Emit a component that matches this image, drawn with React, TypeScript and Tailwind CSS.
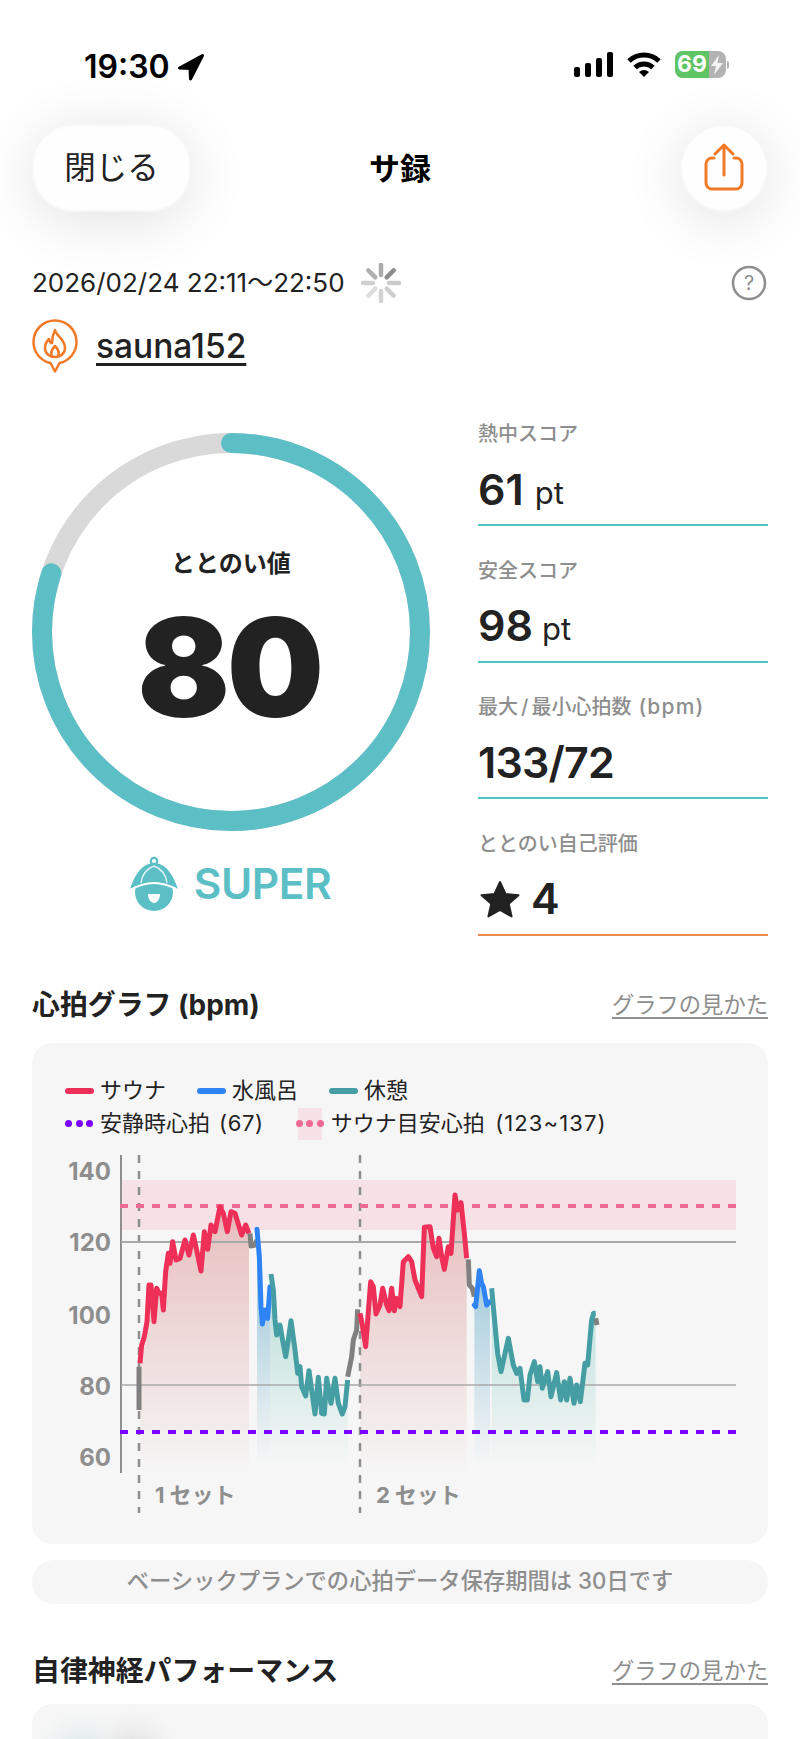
const red1 = "45,520 50,465 58,440 66,395 72,285 78,285 87,395 95,295 103,310 110,310 115,360 122,245 130,190 135,220 143,155 153,210 165,205 180,150 192,195 205,135 215,180 228,243 238,125 248,178 258,105 270,125 285,50 295,70 307,125 318,65 330,70 350,135 362,105 372,130"
const blue1 = "396,118 403,200 408,350 412,402 420,360 428,385 435,290"
const teal1 = "438,252 445,300 450,390 455,435 465,405 470,435 482,500 490,450 498,392 510,480 518,550 525,530 530,590 542,618 552,542 560,600 570,672 580,562 590,670 598,672 605,565 618,640 630,565 640,640 652,672 660,650 668,570"
const red2 = "705,370 712,405 722,470 737,275 745,290 753,372 765,345 773,295 785,345 792,362 800,295 808,362 815,325 825,350 835,215 850,200 860,215 870,270 890,320 898,112 915,110 925,175 935,200 942,145 950,200 958,238 970,170 978,190 990,15 998,60 1008,38 1018,130 1025,205"
const blue2 = "1048,345 1052,350 1063,242 1070,280 1075,290 1085,345 1095,335"
const teal2 = "1100,295 1104,340 1118,490 1128,545 1150,445 1165,525 1175,550 1185,535 1197,630 1207,630 1215,555 1228,515 1238,575 1245,530 1252,595 1268,545 1278,620 1295,548 1307,630 1318,575 1325,630 1335,565 1347,640 1355,585 1366,635 1380,520 1388,525 1400,390 1406,370 1412,370"

const gray = [
  "42,660 42,530",
  "375,130 378,168 390,165 396,150",
  "668,560 680,500 685,450 695,420 698,358",
  "1030,208 1033,285 1042,295 1048,320",
  "1412,385 1416,405",
]

// segments are traced in a 3x grid, offset from the top left of the plot
const toPage = (pts: string) =>
  pts
    .split(" ")
    .map((p) => {
      const [x, y] = p.split(",").map(Number)
      return `${125 + x / 3},${1190 + y / 3}`
    })
    .join(" ")

// area under a segment, closed down to the chart floor
const area = (pts: string) => {
  const list = pts.split(" ")
  const first = list[0].split(",")[0]
  const last = list[list.length - 1].split(",")[0]
  return toPage(`${first},849 ${pts} ${last},849`)
}

function StatusBar() {
  return (
    <div className="flex h-[124px] items-start justify-between pl-[84px] pr-[71px] pt-[49px]">
      <div className="flex items-center gap-[7px]">
        <span className="text-[32px] font-semibold leading-[36px] text-black">19:30</span>
        <svg width="28" height="28" viewBox="0 0 28 28">
          <path d="M25.5 2.5 L2.5 15 L13 15.5 L13.5 26 Z" fill="#000" stroke="#000" strokeWidth="3" strokeLinejoin="round" />
        </svg>
      </div>
      <div className="flex items-center gap-[14px] pt-[2px]">
        <div className="flex h-[25px] items-end gap-[5px]">
          <div className="h-[10px] w-[6px] rounded-[2px] bg-black" />
          <div className="h-[14px] w-[6px] rounded-[2px] bg-black" />
          <div className="h-[19px] w-[6px] rounded-[2px] bg-black" />
          <div className="h-[25px] w-[6px] rounded-[2px] bg-black" />
        </div>
        <svg width="34" height="25" viewBox="0 0 34 25">
          <path d="M2 9 A22 22 0 0 1 32 9" fill="none" stroke="#000" strokeWidth="5" />
          <path d="M8 15.5 A13 13 0 0 1 26 15.5" fill="none" stroke="#000" strokeWidth="5" />
          <path d="M12 20 A8 8 0 0 1 22 20 L17 25 Z" fill="#000" />
        </svg>
        <div className="flex items-center">
          <div className="relative flex h-[27px] w-[51px] overflow-hidden rounded-[8px] bg-[#b3b3b3]">
            <div className="flex h-full w-[34px] items-center justify-center bg-[#5ec464] text-[23px] font-bold leading-none text-white">
              69
            </div>
            <svg width="12" height="20" viewBox="0 0 12 20" className="ml-[2px] mt-[4px]">
              <path d="M8 0 L0 11 L5 11 L3 20 L12 8 L6.5 8 Z" fill="#fff" opacity="0.85" />
            </svg>
          </div>
          <div className="ml-[1px] h-[8px] w-[2px] rounded-r-full bg-[#b3b3b3]" />
        </div>
      </div>
    </div>
  )
}

function NavBar() {
  return (
    <div className="mx-[32px] grid h-[88px] grid-cols-[1fr_auto_1fr] items-center">
      <button className="flex h-[88px] w-[159px] items-center justify-center rounded-[40px] border-2 border-[#f7f7f7] bg-[#fefefe] text-[31.5px] leading-none text-[#222] shadow-[0_8px_60px_rgba(0,0,0,0.12)]">
        閉じる
      </button>
      <div className="text-[31px] font-bold leading-none text-black">サ録</div>
      <div className="flex justify-end">
        <button className="flex h-[88px] w-[88px] items-center justify-center rounded-full border-2 border-[#f7f7f7] bg-[#fefefe] shadow-[0_8px_60px_rgba(0,0,0,0.12)]">
          <svg width="40" height="50" viewBox="0 0 40 50" fill="none" stroke="#f07a28" strokeWidth="3" strokeLinecap="round" strokeLinejoin="round">
            <path d="M10 15 H8 A6 6 0 0 0 2 21 V40 A6 6 0 0 0 8 46 H32 A6 6 0 0 0 38 40 V21 A6 6 0 0 0 32 15 H30" />
            <path d="M20 32 V3 M11 11 L20 2 L29 11" />
          </svg>
        </button>
      </div>
    </div>
  )
}

function Spinner() {
  const colors = ["#aaaaaa", "#8c8c8c", "#cccccc", "#cfcfcf", "#d2d2d2", "#dddddd", "#d0d0d0", "#b0b0b0"]
  return (
    <svg width="40" height="40" viewBox="-20 -20 40 40">
      {colors.map((c, i) => (
        <line key={i} x1="0" y1="-8" x2="0" y2="-18" stroke={c} strokeWidth="4.5" strokeLinecap="round" transform={`rotate(${i * 45})`} />
      ))}
    </svg>
  )
}

function Row(props: { label: React.ReactNode; line: string; children: React.ReactNode }) {
  return (
    <div className="h-[106px] border-b-2 pb-[4px]" style={{ borderColor: props.line }}>
      <div className="text-[20px] font-medium leading-[28px] text-[#8e8e8e]">{props.label}</div>
      <div className="mt-[10px] flex h-[62px] items-center text-[#222]">{props.children}</div>
    </div>
  )
}

function Score() {
  return (
    <div className="relative h-[398px] w-[398px]">
      <svg width="398" height="398" viewBox="0 0 398 398" className="absolute inset-0">
        <circle cx="199" cy="199" r="189" fill="none" stroke="#d9d9d9" strokeWidth="20" />
        <circle
          cx="199"
          cy="199"
          r="189"
          fill="none"
          stroke="#5dbfc6"
          strokeWidth="20"
          strokeLinecap="round"
          strokeDasharray="950 1187.5"
          transform="rotate(-90 199 199)"
        />
      </svg>
      <div className="absolute inset-0 flex flex-col items-center pt-[115px]">
        <div className="text-[24px] font-semibold leading-[32px] text-[#222]">ととのい値</div>
        <div className="mr-[4px] mt-[17px] text-[137px] font-black leading-[140px] tracking-[-3.5px] text-[#222]">80</div>
      </div>
    </div>
  )
}

function HatIcon() {
  return (
    <svg width="50" height="56" viewBox="0 0 50 56">
      <circle cx="25" cy="5" r="3.2" fill="none" stroke="#5dbfc6" strokeWidth="2.2" />
      <circle cx="25" cy="36" r="19" fill="#5dbfc6" />
      <path d="M1 33 C4 24 11 7 25 7 C39 7 46 24 49 33 C40 28 32 26 25 26 C18 26 10 28 1 33 Z" fill="#5dbfc6" />
      <path d="M1 34 C10 29 18 27 25 27 C32 27 40 29 49 34" fill="none" stroke="#fff" strokeWidth="2" />
      <path d="M12 27 C13 19 17 13 25 10 M38 27 C37 19 33 13 25 10" fill="none" stroke="#fff" strokeWidth="1.4" opacity="0.8" />
      <path d="M19 38 H31 C31 43 28 47 25 47 C22 47 19 43 19 38 Z" fill="#fff" />
    </svg>
  )
}

function HeartChart() {
  const fills = [
    [red1, "url(#fillRed)"],
    [red2, "url(#fillRed)"],
    [blue1 + " 437,290", "url(#fillBlue)"],
    [blue2, "url(#fillBlue)"],
    [teal1, "url(#fillTeal)"],
    [teal2, "url(#fillTeal)"],
  ]
  return (
    <svg width="736" height="404" viewBox="32 1140 736 404" className="block">
      <defs>
        <linearGradient id="fillRed" gradientUnits="userSpaceOnUse" x1="0" y1="1190" x2="0" y2="1475">
          <stop offset="0%" stopColor="#d98a8a" stopOpacity="0.55" />
          <stop offset="100%" stopColor="#d98a8a" stopOpacity="0" />
        </linearGradient>
        <linearGradient id="fillBlue" gradientUnits="userSpaceOnUse" x1="0" y1="1230" x2="0" y2="1465">
          <stop offset="0%" stopColor="#7fb8d2" stopOpacity="0.85" />
          <stop offset="100%" stopColor="#7fb8d2" stopOpacity="0" />
        </linearGradient>
        <linearGradient id="fillTeal" gradientUnits="userSpaceOnUse" x1="0" y1="1230" x2="0" y2="1465">
          <stop offset="0%" stopColor="#8ccfc4" stopOpacity="0.75" />
          <stop offset="100%" stopColor="#8ccfc4" stopOpacity="0" />
        </linearGradient>
      </defs>

      <rect x="121" y="1180" width="615" height="50" fill="#f6e1e7" />

      {fills.map(([pts, fill], i) => (
        <polygon key={i} fill={fill} points={area(pts)} />
      ))}

      <line x1="139" y1="1155" x2="139" y2="1513" stroke="#8e8e8e" strokeWidth="2.5" strokeDasharray="8 8" />
      <line x1="360" y1="1155" x2="360" y2="1513" stroke="#8e8e8e" strokeWidth="2.5" strokeDasharray="8 8" />

      <line x1="121" y1="1155" x2="121" y2="1473" stroke="#8e8e8e" strokeWidth="2" />
      <line x1="121" y1="1242" x2="736" y2="1242" stroke="#a8a8a8" strokeWidth="2" />
      <line x1="121" y1="1385" x2="736" y2="1385" stroke="#a8a8a8" strokeWidth="1.5" />
      <line x1="120" y1="1206" x2="736" y2="1206" stroke="#ee6a94" strokeWidth="4" strokeDasharray="8 8" />

      <g transform="translate(125 1190) scale(0.33333)" fill="none" strokeWidth="15" strokeLinejoin="round">
        {gray.map((pts, i) => (
          <polyline key={i} points={pts} stroke="#808080" />
        ))}
        <polyline points={red1} stroke="#ee2f57" />
        <polyline points={red2} stroke="#ee2f57" />
        <polyline points={blue1} stroke="#2f84f5" strokeLinecap="round" />
        <polyline points={blue2} stroke="#2f84f5" strokeLinecap="round" />
        <polyline points={teal1} stroke="#449ea3" />
        <polyline points={teal2} stroke="#449ea3" />
      </g>

      <line x1="120" y1="1432" x2="736" y2="1432" stroke="#7a00ff" strokeWidth="4" strokeDasharray="8 8" />

      <g className="fill-[#8e8e8e] text-[24px] font-bold" textAnchor="end">
        <text x="111" y="1180">140</text>
        <text x="111" y="1251">120</text>
        <text x="111" y="1324">100</text>
        <text x="111" y="1395">80</text>
        <text x="111" y="1466">60</text>
      </g>
      <g className="fill-[#8e8e8e] text-[22px] font-bold">
        <text x="155" y="1503">1<tspan dx="5">セット</tspan></text>
        <text x="376" y="1503">2<tspan dx="5">セット</tspan></text>
      </g>
    </svg>
  )
}

function Dots(props: { color: string }) {
  return (
    <div className="flex w-[28px] items-center justify-between">
      <div className="h-[7px] w-[7px] rounded-full" style={{ backgroundColor: props.color }} />
      <div className="h-[7px] w-[7px] rounded-full" style={{ backgroundColor: props.color }} />
      <div className="h-[7px] w-[7px] rounded-full" style={{ backgroundColor: props.color }} />
    </div>
  )
}

function Legend() {
  const items = [
    { label: "サウナ", color: "#ee2f57" },
    { label: "水風呂", color: "#2f84f5" },
    { label: "休憩", color: "#449ea3" },
  ]
  return (
    <div className="px-[33px] pt-[31.5px] text-[22px] leading-[33px] text-[#222]">
      <div className="flex h-[33px] items-center gap-[31px]">
        {items.map((item) => (
          <div key={item.label} className="flex items-center gap-[6px]">
            <div className="h-[6px] w-[29px] rounded-full" style={{ backgroundColor: item.color }} />
            <span>{item.label}</span>
          </div>
        ))}
      </div>
      <div className="flex h-[33px] items-center">
        <Dots color="#7a00ff" />
        <span className="ml-[7px]">
          安静時心拍<span className="ml-[2px] tracking-[0.7px]"> (67)</span>
        </span>
        <div className="relative ml-[34px] flex h-[32px] w-[24px] items-center justify-center bg-[#f6e1e7]">
          <div className="absolute left-[-2px] top-[12px]">
            <Dots color="#ee6a94" />
          </div>
        </div>
        <span className="ml-[9px]">
          サウナ目安心拍<span className="ml-[3px] tracking-[1.1px]"> (123~137)</span>
        </span>
      </div>
    </div>
  )
}

function SectionHead(props: { title: string }) {
  return (
    <div className="flex h-[40px] items-center justify-between">
      <h2 className="text-[27.9px] font-bold leading-none text-[#222]">{props.title}</h2>
      <a className="text-[22.3px] leading-none text-[#8e8e8e] underline underline-offset-4">グラフの見かた</a>
    </div>
  )
}

export default function App() {
  return (
    <div
      className="h-[1739px] w-[800px] overflow-hidden bg-white"
      style={{ fontFamily: 'Inter, "Noto Sans CJK JP", sans-serif' }}
    >
      <StatusBar />
      <NavBar />

      <div className="mx-[32px] mt-[51px] flex h-[40px] items-center">
        <span className="text-[26px] leading-none text-[#222]">2026/02/24 22:11～22:50</span>
        <div className="ml-[16px]">
          <Spinner />
        </div>
        <svg width="36" height="36" viewBox="0 0 36 36" className="ml-auto mr-[1px]">
          <circle cx="18" cy="18" r="16" fill="none" stroke="#8e8e8e" strokeWidth="2.5" />
          <text x="18" y="25" textAnchor="middle" className="fill-[#8e8e8e] text-[20px]">?</text>
        </svg>
      </div>

      <div className="mx-[32px] mt-[16px] flex h-[54px] items-center gap-[18px]">
        <svg width="46" height="54" viewBox="0 0 46 54" fill="none" stroke="#f07a28" strokeWidth="2.5" strokeLinejoin="round" strokeLinecap="round">
          <path d="M23 1.5 C11 1.5 1.5 11 1.5 23 C1.5 33.5 9 42 18.5 44 L23 52.5 L27.5 44 C37 42 44.5 33.5 44.5 23 C44.5 11 35 1.5 23 1.5 Z" />
          <path d="M23 11 C24 17 33 20 33 29 C33 35 28 38 23 38 C18 38 13 35 13 29 C13 25 15 22 17 20 C17.5 23 19 24 20 24 C20 19 21 15 23 11 Z" />
          <path d="M20 37 C18 33 20 30 23 27 C26 30 28 33 26 37" />
        </svg>
        <span className="text-[33.5px] font-medium leading-[40px] text-[#222] underline decoration-[3px] underline-offset-[5px]">sauna152</span>
      </div>

      <div className="mx-[32px] mt-[47px] flex justify-between">
        <div className="pt-[13px]">
          <Score />
          <div className="mr-[2px] mt-[26px] flex h-[54px] items-center justify-center gap-[15px]">
            <HatIcon />
            <span className="text-[42.5px] font-semibold leading-none tracking-[-0.5px] text-[#5dbfc6]">SUPER</span>
          </div>
        </div>

        <div className="flex w-[290px] flex-col gap-[30.5px]">
          <Row label="熱中スコア" line="#4fc4c4">
            <span className="text-[43px] font-semibold leading-none">61</span>
            <span className="ml-[11px] mt-[6px] text-[31px] leading-none">pt</span>
          </Row>
          <Row label="安全スコア" line="#4fc4c4">
            <span className="text-[43px] font-semibold leading-none">98</span>
            <span className="ml-[9px] mt-[6px] text-[31px] leading-none">pt</span>
          </Row>
          <Row
            label={
              <>
                最大<span className="mx-[3px]">/</span>最小心拍数<span className="ml-[7px] text-[21px] tracking-[1.2px]">(bpm)</span>
              </>
            }
            line="#4fc4c4"
          >
            <span className="text-[43px] font-semibold leading-none tracking-[-0.8px]">133/72</span>
          </Row>
          <Row label="ととのい自己評価" line="#f08a4b">
            <svg width="42" height="38" viewBox="0 0 42 38" className="ml-[1px]">
              <path d="M21 2 L26.5 14 L39.5 15.2 L29.7 23.8 L32.6 36.5 L21 29.8 L9.4 36.5 L12.3 23.8 L2.5 15.2 L15.5 14 Z" fill="#222" stroke="#222" strokeWidth="2" strokeLinejoin="round" />
            </svg>
            <span className="ml-[10px] text-[43px] font-semibold leading-none">4</span>
          </Row>
        </div>
      </div>

      <div className="mx-[32px] mt-[50px]">
        <SectionHead title="心拍グラフ (bpm)" />
        <div className="mt-[17px] h-[501px] overflow-hidden rounded-[20px] bg-[#f6f6f6]">
          <Legend />
          <HeartChart />
        </div>
        <div className="mt-[16px] flex h-[44px] items-center justify-center rounded-[22px] bg-[#f6f6f6] text-[22.3px] font-medium leading-none text-[#8e8e8e]">
          ベーシックプランでの心拍データ保存期間は 30日です
        </div>
        <div className="mt-[48px]">
          <SectionHead title="自律神経パフォーマンス" />
        </div>
        <div className="relative mt-[12px] h-[120px] overflow-hidden rounded-[20px] bg-[#f6f6f6]">
          <div className="absolute left-[24px] top-[28px] h-[90px] w-[50px] rounded-full bg-[#d8e8e9] blur-[12px]" />
          <div className="absolute left-[76px] top-[26px] h-[90px] w-[50px] rounded-full bg-[#e0e0e0] blur-[12px]" />
        </div>
      </div>
    </div>
  )
}
